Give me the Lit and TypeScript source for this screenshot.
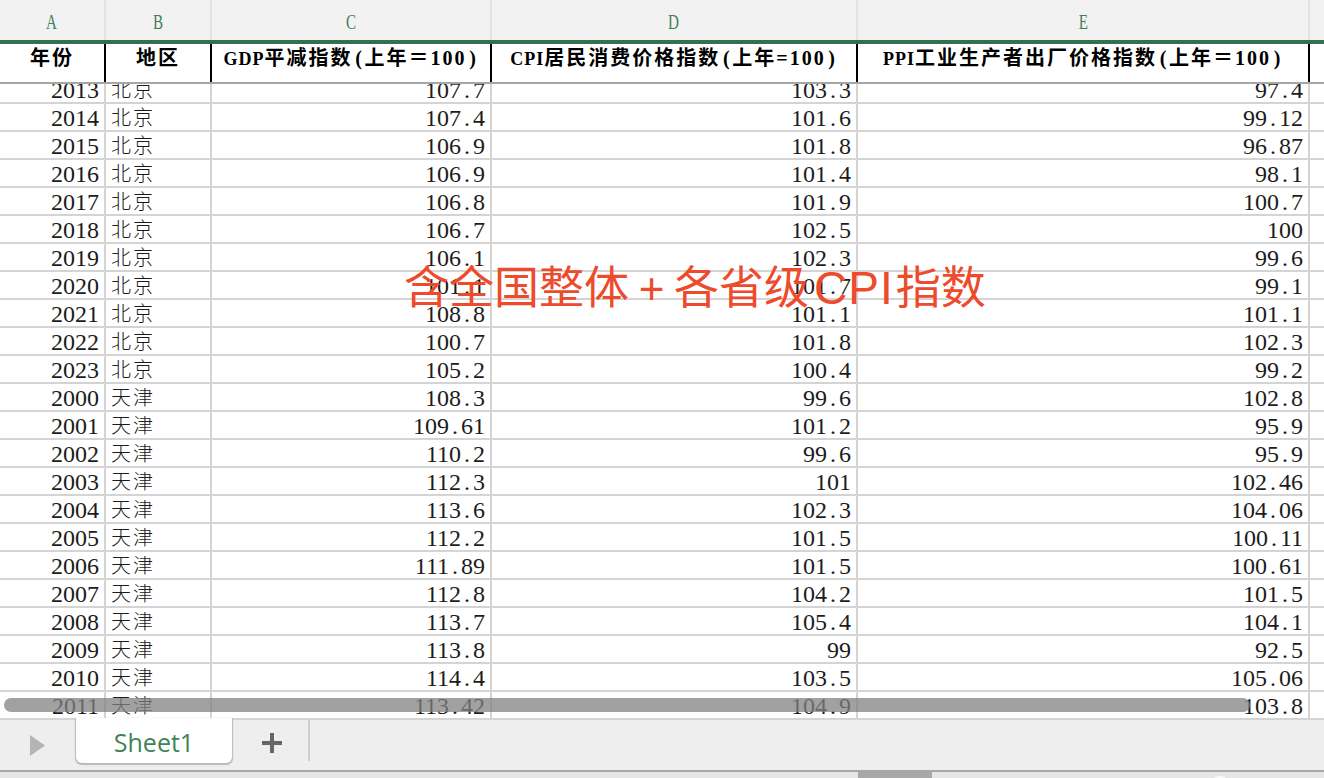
import { LitElement, html, css } from "lit";
import { customElement } from "lit/decorators.js";

const rows: string[][] = [
  ["2013","北京","107.7","103.3","97.4"],
  ["2014","北京","107.4","101.6","99.12"],
  ["2015","北京","106.9","101.8","96.87"],
  ["2016","北京","106.9","101.4","98.1"],
  ["2017","北京","106.8","101.9","100.7"],
  ["2018","北京","106.7","102.5","100"],
  ["2019","北京","106.1","102.3","99.6"],
  ["2020","北京","101.1","101.7","99.1"],
  ["2021","北京","108.8","101.1","101.1"],
  ["2022","北京","100.7","101.8","102.3"],
  ["2023","北京","105.2","100.4","99.2"],
  ["2000","天津","108.3","99.6","102.8"],
  ["2001","天津","109.61","101.2","95.9"],
  ["2002","天津","110.2","99.6","95.9"],
  ["2003","天津","112.3","101","102.46"],
  ["2004","天津","113.6","102.3","104.06"],
  ["2005","天津","112.2","101.5","100.11"],
  ["2006","天津","111.89","101.5","100.61"],
  ["2007","天津","112.8","104.2","101.5"],
  ["2008","天津","113.7","105.4","104.1"],
  ["2009","天津","113.8","99","92.5"],
  ["2010","天津","114.4","103.5","105.06"],
  ["2011","天津","113.42","104.9","103.8"],
];

const heads: [string, string, string][] = [
  ["", "年份", ""],
  ["", "地区", ""],
  ["GDP", "平减指数", "上年＝100"],
  ["CPI", "居民消费价格指数", "上年=100"],
  ["PPI", "工业生产者出厂价格指数", "上年＝100"],
];

@customElement("app-root")
export class AppRoot extends LitElement {
  static styles = css`
    :host {
      display: flex;
      flex-direction: column;
      position: relative;
      width: 1324px;
      height: 778px;
      overflow: hidden;
      background: #fff;
      font-family: "Liberation Serif", "Noto Sans CJK SC", serif;
      font-size: 20px;
      letter-spacing: 2px;
      color: #1c1c1c;
    }
    .grid {
      display: grid;
      grid-template-columns: 106px 106px 280px 366px 452px 14px;
    }
    .letters {
      height: 40px;
      flex: none;
      background: #f2f2f2;
      border-bottom: 4px solid #33704f;
    }
    .letters div {
      display: flex;
      align-items: center;
      justify-content: center;
      padding: 5px 0 0 0;
      color: #3f7f58;
      font-size: 21px;
      letter-spacing: 0;
      border-right: 2px solid #e3e3e3;
    }
    .letters div:last-child { border-right: 0; }
    .letters span { display: inline-block; transform: scaleX(0.72); }
    .heads {
      height: 38px;
      flex: none;
      background: #fff;
      border-bottom: 2px solid #a6a6a6;
      font-weight: 700;
      color: #000;
      white-space: nowrap;
    }
    .heads div {
      display: flex;
      align-items: flex-start;
      justify-content: center;
      padding-top: 4px;
      box-sizing: border-box;
      border-right: 2px solid #000;
      line-height: 20px;
    }
    .heads div:last-child { border-right: 0; }
    .lat { font-size: 18px; letter-spacing: 1px; }
    .par { display: inline-block; width: 12px; text-align: center; letter-spacing: 0; }
    .body {
      height: 636px;
      flex: none;
      overflow: hidden;
    }
    .table { margin-top: -8px; }
    .cell {
      height: 28px;
      box-sizing: border-box;
      border-right: 2px solid #d4d4d4;
      border-bottom: 2px solid #d4d4d4;
      line-height: 28px;
      white-space: nowrap;
      overflow: hidden;
    }
    .cell.num { text-align: right; padding-right: 5px; font-size: 24px; letter-spacing: 0; }
    .cell.txt { padding-left: 5px; font-weight: 300; }
    .cell.end { border-right: 0; }
    .dot { display: inline-block; width: 12px; text-align: center; }
    .tabs {
      flex: none;
      height: 50px;
      background: #eeeeee;
      display: flex;
      align-items: flex-start;
      border-bottom: 2px solid #a8a8a8;
    }
    .arrow { width: 76px; flex: none; display: flex; padding: 15px 0 0 30px; box-sizing: border-box; }
    .tab {
      width: 156px;
      height: 45px;
      margin-top: -2px;
      flex: none;
      box-sizing: border-box;
      background: #fff;
      border-radius: 0 0 6px 6px;
      box-shadow: 0 1px 1px 1px #b8b8b8;
      color: #3f8457;
      font-family: "Open Sans", "Liberation Sans", sans-serif;
      font-size: 25px;
      letter-spacing: 0;
      line-height: 48px;
      text-align: center;
    }
    .plus { width: 76px; flex: none; display: flex; justify-content: center; padding: 13px 0 0 4px; box-sizing: border-box; }
    .sep { width: 2px; height: 41px; background: #cfcfcf; flex: none; }
    .status { flex: 1; background: #e6e6e6; display: flex; }
    .thumb { width: 74px; margin-left: 858px; background: #a8a8a8; }
    .knob {
      position: absolute;
      left: 1209px;
      top: 776px;
      width: 22px;
      height: 22px;
      border-radius: 50%;
      background: #fbfbfb;
    }
    .hbar {
      position: absolute;
      left: 4px;
      top: 698px;
      width: 1246px;
      height: 14px;
      border-radius: 7px;
      background: rgba(130, 130, 130, 0.75);
    }
    .mark {
      position: absolute;
      left: 404px;
      top: 252px;
      font-family: "Noto Sans CJK SC", "Liberation Sans", sans-serif;
      font-size: 45px;
      line-height: 66px;
      letter-spacing: 0;
      font-weight: 400;
      color: #ee4a2c;
      white-space: nowrap;
    }
    .mark .pl { display: inline-block; width: 45px; text-align: center; font-family: "Liberation Sans", sans-serif; font-size: 44px; }
    .mark .cpi { font-family: "Liberation Sans", sans-serif; font-size: 46px; letter-spacing: 1px; margin: 0 2px 0 5px; }
  `;

  private num(v: string) {
    const [a, b] = v.split(".");
    return b === undefined ? html`${a}` : html`${a}<span class="dot">.</span>${b}`;
  }

  private head([l, m, p]: [string, string, string]) {
    return html`<div><span>${l ? html`<span class="lat">${l}</span>` : ""}${m}${p
      ? html`<span class="par">(</span>${p}<span class="par">)</span>`
      : ""}</span></div>`;
  }

  render() {
    return html`
      <div class="grid letters">
        ${["A","B","C","D","E",""].map((l) => html`<div><span>${l}</span></div>`)}
      </div>
      <div class="grid heads">
        ${heads.map((h) => this.head(h))}
        <div></div>
      </div>
      <div class="body">
        <div class="grid table">
          ${rows.map((r) => html`
            <div class="cell num">${r[0]}</div>
            <div class="cell txt">${r[1]}</div>
            <div class="cell num">${this.num(r[2])}</div>
            <div class="cell num">${this.num(r[3])}</div>
            <div class="cell num">${this.num(r[4])}</div>
            <div class="cell end"></div>
          `)}
        </div>
      </div>
      <div class="tabs">
        <div class="arrow">
          <svg width="15" height="21" viewBox="0 0 15 21"><path d="M0 0 L15 10.5 L0 21 Z" fill="#b4b4b4"/></svg>
        </div>
        <div class="tab">Sheet1</div>
        <div class="plus">
          <svg width="20" height="20" viewBox="0 0 20 20"><path d="M8 0h4v8h8v4h-8v8H8v-8H0V8h8z" fill="#666"/></svg>
        </div>
        <div class="sep"></div>
      </div>
      <div class="status"><div class="thumb"></div></div>
      <div class="knob"></div>
      <div class="hbar"></div>
      <div class="mark">含全国整体<span class="pl">+</span>各省级<span class="cpi">CPI</span>指数</div>
    `;
  }
}
